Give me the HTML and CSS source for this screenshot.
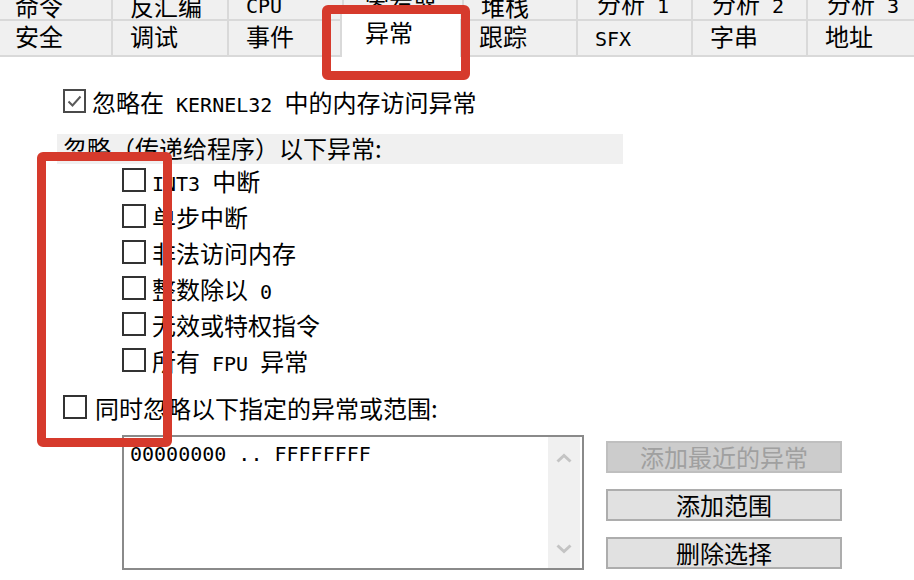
FILE: index.html
```html
<!DOCTYPE html>
<html lang="zh-CN">
<head>
<meta charset="utf-8">
<title>异常</title>
<link rel="stylesheet" href="styles.css">
</head>
<body>
<div class="tabs">
  <div class="row row-back">
    <div class="tab"><span>命令</span></div>
    <div class="tab"><span>反汇编</span></div>
    <div class="tab"><span class="m">CPU</span></div>
    <div class="tab"><span>寄存器</span></div>
    <div class="tab"><span>堆栈</span></div>
    <div class="tab"><span>分析<span class="m"> 1</span></span></div>
    <div class="tab"><span>分析<span class="m"> 2</span></span></div>
    <div class="tab"><span>分析<span class="m"> 3</span></span></div>
  </div>
  <div class="row row-front">
    <div class="tab">安全</div>
    <div class="tab">调试</div>
    <div class="tab">事件</div>
    <div class="tab sel">异常</div>
    <div class="tab">跟踪</div>
    <div class="tab"><span class="m">SFX</span></div>
    <div class="tab">字串</div>
    <div class="tab">地址</div>
  </div>
</div>

<div class="content">
  <div class="opt top">
    <span class="cb checked"><svg width="17" height="17" viewBox="0 0 17 17"><polyline points="2.5,8.5 6.5,12.5 14.5,3.5" fill="none" stroke="#5a5a5a" stroke-width="2"/></svg></span>
    <span class="lbl">忽略在<span class="m"> KERNEL32 </span>中的内存访问异常</span>
  </div>
  <div class="gt">忽略（传递给程序）以下异常:</div>
  <div class="sub">
    <div class="opt"><span class="cb"></span><span class="lbl"><span class="m">INT3 </span>中断</span></div>
    <div class="opt"><span class="cb"></span><span class="lbl">单步中断</span></div>
    <div class="opt"><span class="cb"></span><span class="lbl">非法访问内存</span></div>
    <div class="opt"><span class="cb"></span><span class="lbl">整数除以<span class="m"> 0</span></span></div>
    <div class="opt"><span class="cb"></span><span class="lbl">无效或特权指令</span></div>
    <div class="opt"><span class="cb"></span><span class="lbl">所有<span class="m"> FPU </span>异常</span></div>
  </div>
  <div class="opt also"><span class="cb wide"></span><span class="lbl">同时忽略以下指定的异常或范围:</span></div>
  <div class="lower">
    <div class="list">
      <div class="list-text"><span class="m">00000000 .. FFFFFFFF</span></div>
      <div class="sb">
        <svg width="16" height="10" viewBox="0 0 16 10"><polyline points="1.5,8.5 8,2.5 14.5,8.5" fill="none" stroke="#c4c4c4" stroke-width="3"/></svg>
        <svg width="16" height="10" viewBox="0 0 16 10"><polyline points="1.5,1.5 8,7.5 14.5,1.5" fill="none" stroke="#c4c4c4" stroke-width="3"/></svg>
      </div>
    </div>
    <div class="btns">
      <div class="btn dis">添加最近的异常</div>
      <div class="btn">添加范围</div>
      <div class="btn">删除选择</div>
    </div>
  </div>
</div>

<div class="mark mark1"></div>
<div class="mark mark2"></div>
</body>
</html>
```

FILE: styles.css
```css
* { box-sizing: border-box; }
html, body { margin: 0; padding: 0; }
body {
  width: 914px;
  height: 580px;
  overflow: hidden;
  position: relative;
  background: #ffffff;
  color: #000000;
  font-family: "Noto Sans CJK SC", "Noto Sans", sans-serif;
  font-size: 24px;
}
.m {
  font-family: "DejaVu Sans Mono", "Liberation Mono", monospace;
  font-size: 20px;
  white-space: pre;
}

/* tab strip */
.row { display: grid; }
.row-back {
  grid-template-columns: 111px 116px 115px 120px 114px 115px 115px 1fr;
  grid-template-rows: 19px;
  height: 21px;
  background: #f0f0f0;
  border-bottom: 2px solid #d9d9d9;
}
.row-back .tab {
  display: flex;
  align-items: flex-end;
  height: 19px;
  padding-left: 17px;
  padding-bottom: 1px;
  border-left: 2px solid #d9d9d9;
  line-height: 24px;
  white-space: nowrap;
}
.row-back .tab:first-child { border-left: 0; padding-left: 15px; }
.row-back .tab:nth-child(4) { padding-left: 21px; }
.row-back .tab:nth-child(6),
.row-back .tab:nth-child(7),
.row-back .tab:nth-child(8) { padding-left: 19px; }
.row-front {
  grid-template-columns: 111px 116px 113px 120px 116px 115px 115px 1fr;
  grid-template-rows: 36px;
  height: 36px;
}
.row-front .tab {
  background: #f0f0f0;
  border-left: 2px solid #d9d9d9;
  border-bottom: 2px solid #d9d9d9;
  padding-left: 17px;
  line-height: 30px;
  white-space: nowrap;
}
.row-front .tab:first-child { border-left: 0; padding-left: 15px; }
.row-front .tab.sel {
  background: #ffffff;
  border-bottom: 0;
  margin-top: -15px;
  padding-left: 23px;
  padding-top: 10px;
  line-height: 32px;
  z-index: 1;
}

/* content */
.content { padding-left: 63px; }
.opt {
  display: flex;
  align-items: center;
  height: 36px;
  white-space: nowrap;
}
.cb {
  flex: none;
  width: 24px;
  height: 24px;
  border: 2px solid #333333;
  background: #ffffff;
  margin-right: 6px;
  display: flex;
  align-items: center;
  justify-content: center;
}
.cb.checked { border-color: #4a4a4a; width: 23px; }
.cb.wide { margin-right: 8px; }
.top { margin-top: 26px; }
.gt {
  margin-top: 15px;
  margin-left: -6px;
  padding-left: 6px;
  width: 566px;
  height: 30px;
  line-height: 28px;
  background: #f0f0f0;
  white-space: nowrap;
}
.sub { padding-left: 59px; margin-top: -2px; }
.also { margin-top: 11px; }

.lower {
  display: flex;
  align-items: flex-start;
  gap: 22px;
  margin-top: 10px;
  margin-left: 59px;
}
.list {
  width: 462px;
  height: 135px;
  border: 2px solid #8a8a8a;
  padding-right: 2px;
  display: flex;
  background: #ffffff;
}
.list-text {
  flex: 1;
  padding: 2px 0 0 6px;
  line-height: 24px;
}
.sb {
  width: 32px;
  background: #f0f0f0;
  display: flex;
  flex-direction: column;
  justify-content: space-between;
  align-items: center;
  padding: 16px 0 14px;
}
.btns {
  display: flex;
  flex-direction: column;
  gap: 16px;
  margin-top: 6px;
}
.btn {
  width: 236px;
  height: 32px;
  border: 2px solid #adadad;
  background: #e1e1e1;
  text-align: center;
  line-height: 28px;
}
.btn.dis {
  background: #cccccc;
  border-color: #bfbfbf;
  color: #a0a0a0;
}

/* annotation boxes */
.mark {
  position: absolute;
  border: 9px solid #d63a2c;
  border-radius: 6px;
  z-index: 5;
}
.mark1 { left: 322px; top: 5px; width: 148px; height: 75px; }
.mark2 { left: 37px; top: 152px; width: 135px; height: 295px; }
```
